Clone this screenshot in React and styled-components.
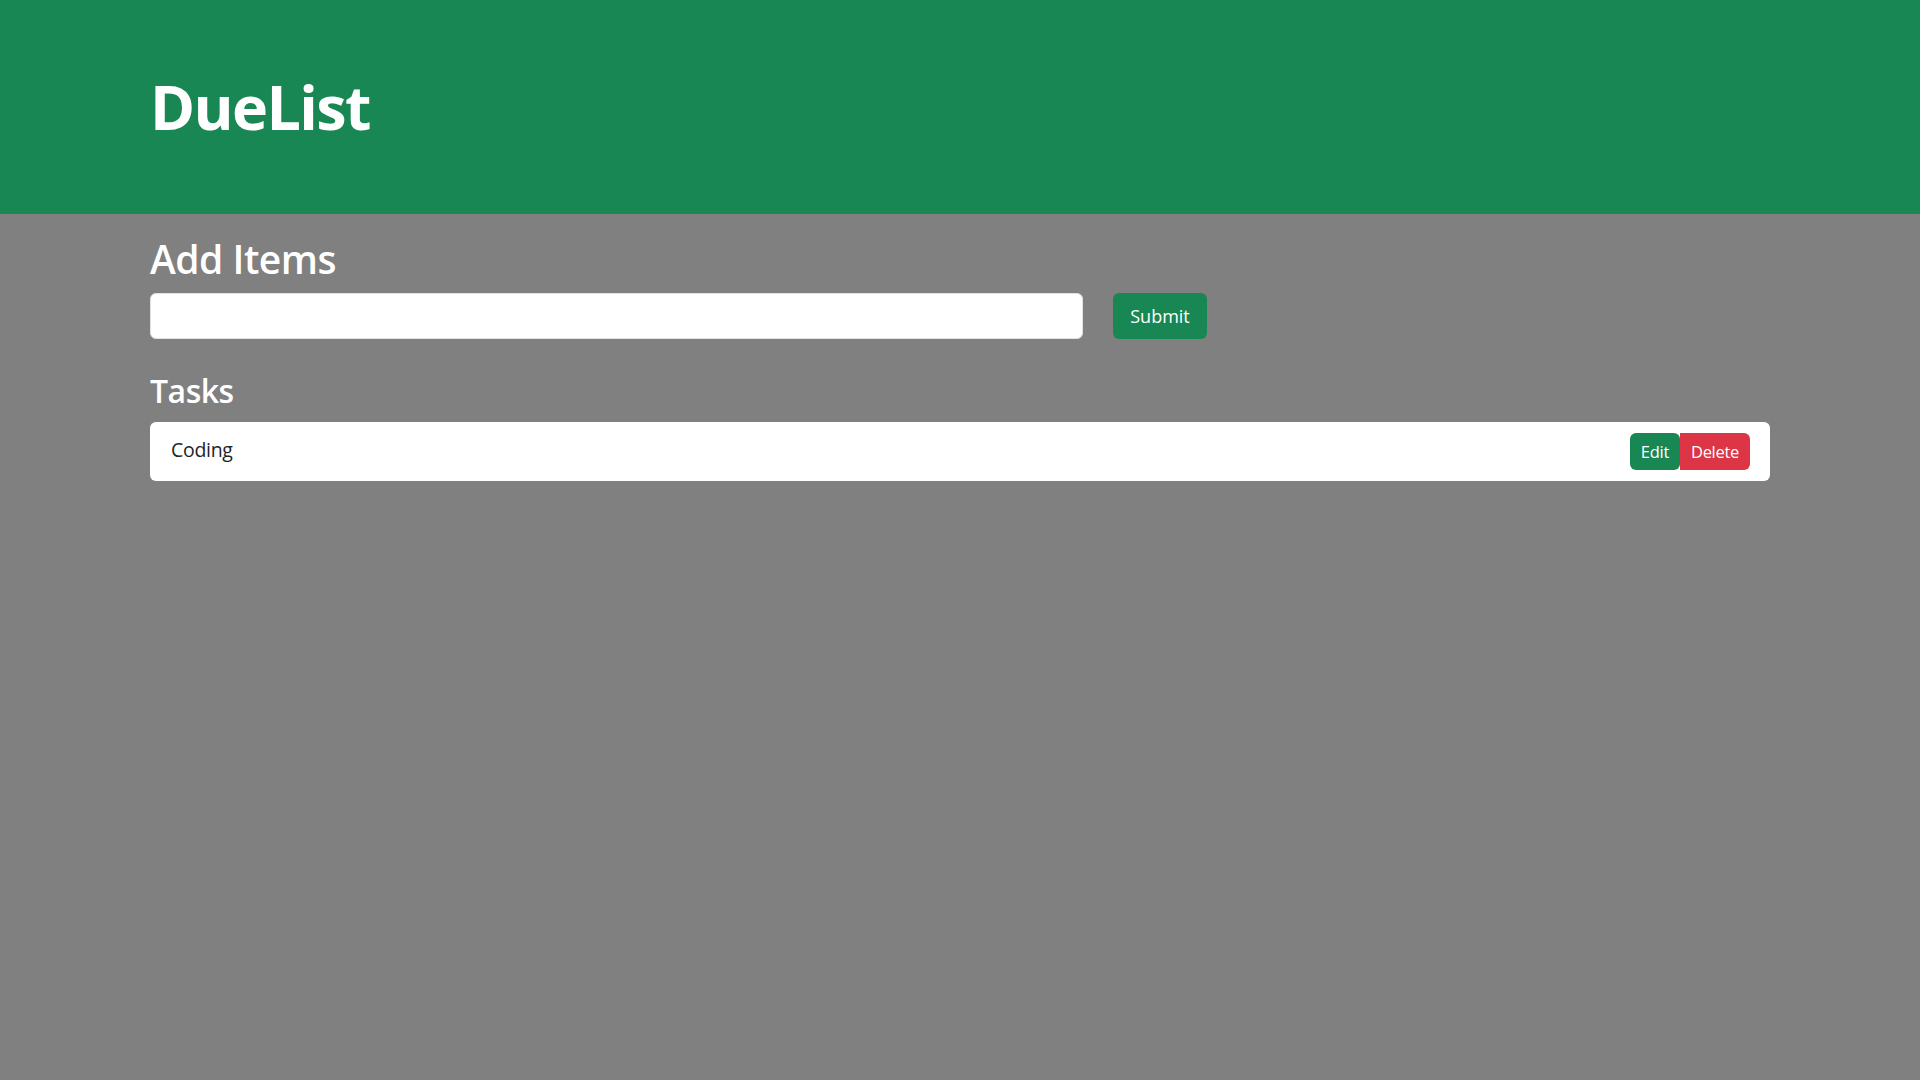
import styled, { createGlobalStyle } from "styled-components";

const GlobalStyle = createGlobalStyle`
  * {
    box-sizing: border-box;
  }
  body {
    margin: 0;
    background-color: #808080;
    font-family: "Open Sans", "Noto Sans", sans-serif;
    color: #212529;
  }
`;

// header bar
const Header = styled.header`
  height: 214px;
  background-color: #198754;
  display: flex;
  align-items: center;
`;
const Wrap = styled.div`
  width: 1620px;
  margin: 0 auto;
`;
const Brand = styled.h1`
  margin: 0;
  color: white;
  font-size: 61px;
  font-weight: 700;
  letter-spacing: -1.6px;
  line-height: 1.2;
`;

const Main = styled(Wrap)`
  padding-top: 22px;
`;
const Heading = styled.h2`
  margin: 0 0 ${(p) => p.$gap || 10}px;
  color: white;
  font-size: ${(p) => p.$size}px;
  font-weight: 600;
  line-height: 1.2;
  letter-spacing: -0.5px;
`;

const Form = styled.form`
  display: flex;
  gap: 30px;
  margin-bottom: 33px;
`;
const Input = styled.input`
  width: 933px;
  height: 46px;
  border: 1px solid #dee2e6;
  border-radius: 6px;
  background: white;
  padding: 0 16px;
  font-size: 20px;
  font-family: inherit;
`;
const Button = styled.button`
  border: none;
  cursor: pointer;
  color: white;
  font-family: inherit;
  background-color: ${(p) => (p.$danger ? "#dc3545" : "#198754")};
  border-radius: 6px;
`;
const SubmitButton = styled(Button)`
  width: 94px;
  height: 46px;
  font-size: 18px;
`;

const TaskList = styled.ul`
  list-style: none;
  margin: 0;
  padding: 0;
`;
const TaskItem = styled.li`
  display: flex;
  align-items: flex-start;
  justify-content: space-between;
  background: white;
  border-radius: 6px;
  padding: 11px 20px 11px 21px;
  min-height: 59px;
`;
const TaskText = styled.span`
  font-size: 19.5px;
  line-height: 1.5;
  padding-top: 2px;
  letter-spacing: -0.3px;
`;
const Actions = styled.div`
  display: flex;
`;
const SmallButton = styled(Button)`
  height: 37px;
  padding: 0 11px;
  font-size: 16.5px;
  letter-spacing: -0.3px;
  border-radius: ${(p) => (p.$danger ? "0 6px 6px 0" : "6px")};
`;

export default function App() {
  return (
    <>
      <GlobalStyle />
      <Header>
        <Wrap>
          <Brand>DueList</Brand>
        </Wrap>
      </Header>
      <Main>
        <Heading $size={39}>Add Items</Heading>
        <Form onSubmit={(e) => e.preventDefault()}>
          <Input type="text" />
          <SubmitButton type="submit">Submit</SubmitButton>
        </Form>
        <Heading $size={32} $gap={12}>Tasks</Heading>
        <TaskList>
          <TaskItem>
            <TaskText>Coding</TaskText>
            <Actions>
              <SmallButton>Edit</SmallButton>
              <SmallButton $danger>Delete</SmallButton>
            </Actions>
          </TaskItem>
        </TaskList>
      </Main>
    </>
  );
}
